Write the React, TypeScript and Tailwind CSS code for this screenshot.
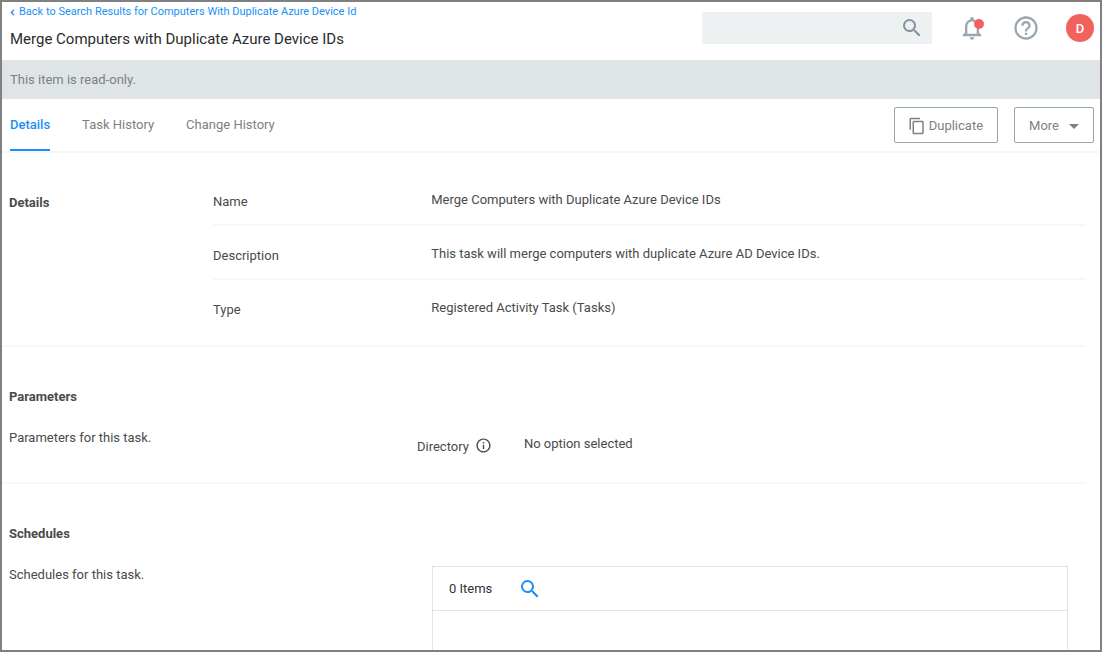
import type { ReactNode } from 'react';
import {
  MdArrowDropDown,
  MdContentCopy,
  MdHelpOutline,
  MdInfoOutline,
  MdNotificationsNone,
  MdSearch,
} from 'react-icons/md';

const tabs = ['Details', 'Task History', 'Change History'];

const details = [
  { label: 'Name', value: 'Merge Computers with Duplicate Azure Device IDs' },
  { label: 'Description', value: 'This task will merge computers with duplicate Azure AD Device IDs.' },
  { label: 'Type', value: 'Registered Activity Task (Tasks)' },
];

function Header() {
  return (
    <header className="flex h-[58px] items-start justify-between pr-[6px] pl-2">
      <div className="flex flex-col">
        <a href="#results" className="flex items-center gap-1 text-[11px] leading-5 text-[#1a8ff5]">
          <svg width="5" height="7" viewBox="0 0 5 7" fill="none" stroke="currentColor" strokeWidth="1.2" aria-hidden="true">
            <path d="M4 0.8 1.2 3.5 4 6.2" />
          </svg>
          Back to Search Results for Computers With Duplicate Azure Device Id
        </a>
        <h1 className="mt-[7px] text-[15px] leading-5 text-[#2b2b2b]">
          Merge Computers with Duplicate Azure Device IDs
        </h1>
      </div>
      <div className="flex items-center gap-[26px] pt-[10px]">
        <label className="flex h-8 w-[230px] items-center bg-[#edf1f2] pr-2 pl-2 text-[#84919e]">
          <input type="search" aria-label="Search" className="min-w-0 flex-1 bg-transparent text-[13px] outline-none" />
          <MdSearch size={24} />
        </label>
        <button type="button" aria-label="Notifications" className="relative text-[#9ba7b0]">
          <MdNotificationsNone size={28} />
          <span className="absolute top-[5px] right-[2px] size-[10px] rounded-full bg-[#f1625f]" />
        </button>
        <button type="button" aria-label="Help" className="text-[#9ba7b0]">
          <MdHelpOutline size={28} />
        </button>
        <button
          type="button"
          aria-label="Account"
          className="size-7 rounded-full bg-[#f1625f] pt-px text-[13px] font-medium text-white"
        >
          D
        </button>
      </div>
    </header>
  );
}

function Toolbar() {
  return (
    <div className="flex h-[54px] justify-between border-b-2 border-[#f7f7f7] pr-[6px] pl-2">
      <nav className="flex gap-8 text-[13px]">
        {tabs.map((tab, i) => (
          <a
            key={tab}
            href="#tab"
            aria-current={i === 0 ? 'page' : undefined}
            className={
              i === 0
                ? 'border-b-2 border-[#1a8ff5] pt-4 leading-5 font-medium text-[#1a8ff5]'
                : 'pt-4 leading-5 text-[#808080]'
            }
          >
            {tab}
          </a>
        ))}
      </nav>
      <div className="flex items-center gap-4 text-[13px] text-[#808080]">
        <button type="button" className="flex h-9 items-center gap-[3px] rounded-xs border border-[#98a4ae] pt-px pr-[14px] pl-[13px]">
          <MdContentCopy size={18} />
          Duplicate
        </button>
        <button type="button" className="flex h-9 items-center gap-[3px] rounded-xs border border-[#98a4ae] pt-px pr-[7px] pl-[14px]">
          More
          <MdArrowDropDown size={24} />
        </button>
      </div>
    </div>
  );
}

function Section({ title, text, children }: { title: string; text: string; children: ReactNode }) {
  return (
    <section className="mr-[14px] border-b-2 border-[#f7f7f7] pt-10 pb-[25px] pl-[7px]">
      <h2 className="leading-5 font-bold">{title}</h2>
      <div className="mt-[22px] flex items-start leading-[18px]">
        <p className="w-[408px]">{text}</p>
        {children}
      </div>
    </section>
  );
}

export default function App() {
  return (
    <div className="h-screen overflow-hidden border-2 border-[#808080] bg-white font-['Roboto',sans-serif] text-[13px] text-[#4a4a4a]">
      <Header />
      <div className="bg-[#dfe5e7] px-2 py-[10px] leading-[19px] text-[#808080]">This item is read-only.</div>
      <Toolbar />
      <main>
        <section className="mr-[14px] flex border-b-2 border-[#f7f7f7] pt-[19px] pb-[11px] pl-[7px]">
          <h2 className="w-[204px] pt-5 leading-[22px] font-bold">Details</h2>
          <dl className="flex-1 divide-y-2 divide-[#f7f7f7]">
            {details.map(({ label, value }) => (
              <div key={label} className="grid h-[54px] grid-cols-4 leading-5">
                <dt className="pt-5">{label}</dt>
                <dd className="col-span-3 pt-[18px]">{value}</dd>
              </div>
            ))}
          </dl>
        </section>

        <Section title="Parameters" text="Parameters for this task.">
          <div className="flex leading-5">
            <span className="flex items-start gap-[6px] pt-2">
              Directory
              <MdInfoOutline size={17} />
            </span>
            <span className="pt-[5px] pl-8">No option selected</span>
          </div>
        </Section>

        <Section title="Schedules" text="Schedules for this task.">
          <div className="mr-[18px] ml-[15px] h-[200px] flex-1 border border-[#e2e2e2]">
            <div className="flex h-11 items-center gap-[26px] border-b border-[#e2e2e2] pl-4 text-[#333333]">
              0 Items
              <button type="button" aria-label="Search schedules" className="text-[#1a8ff5]">
                <MdSearch size={24} />
              </button>
            </div>
          </div>
        </Section>
      </main>
    </div>
  );
}
